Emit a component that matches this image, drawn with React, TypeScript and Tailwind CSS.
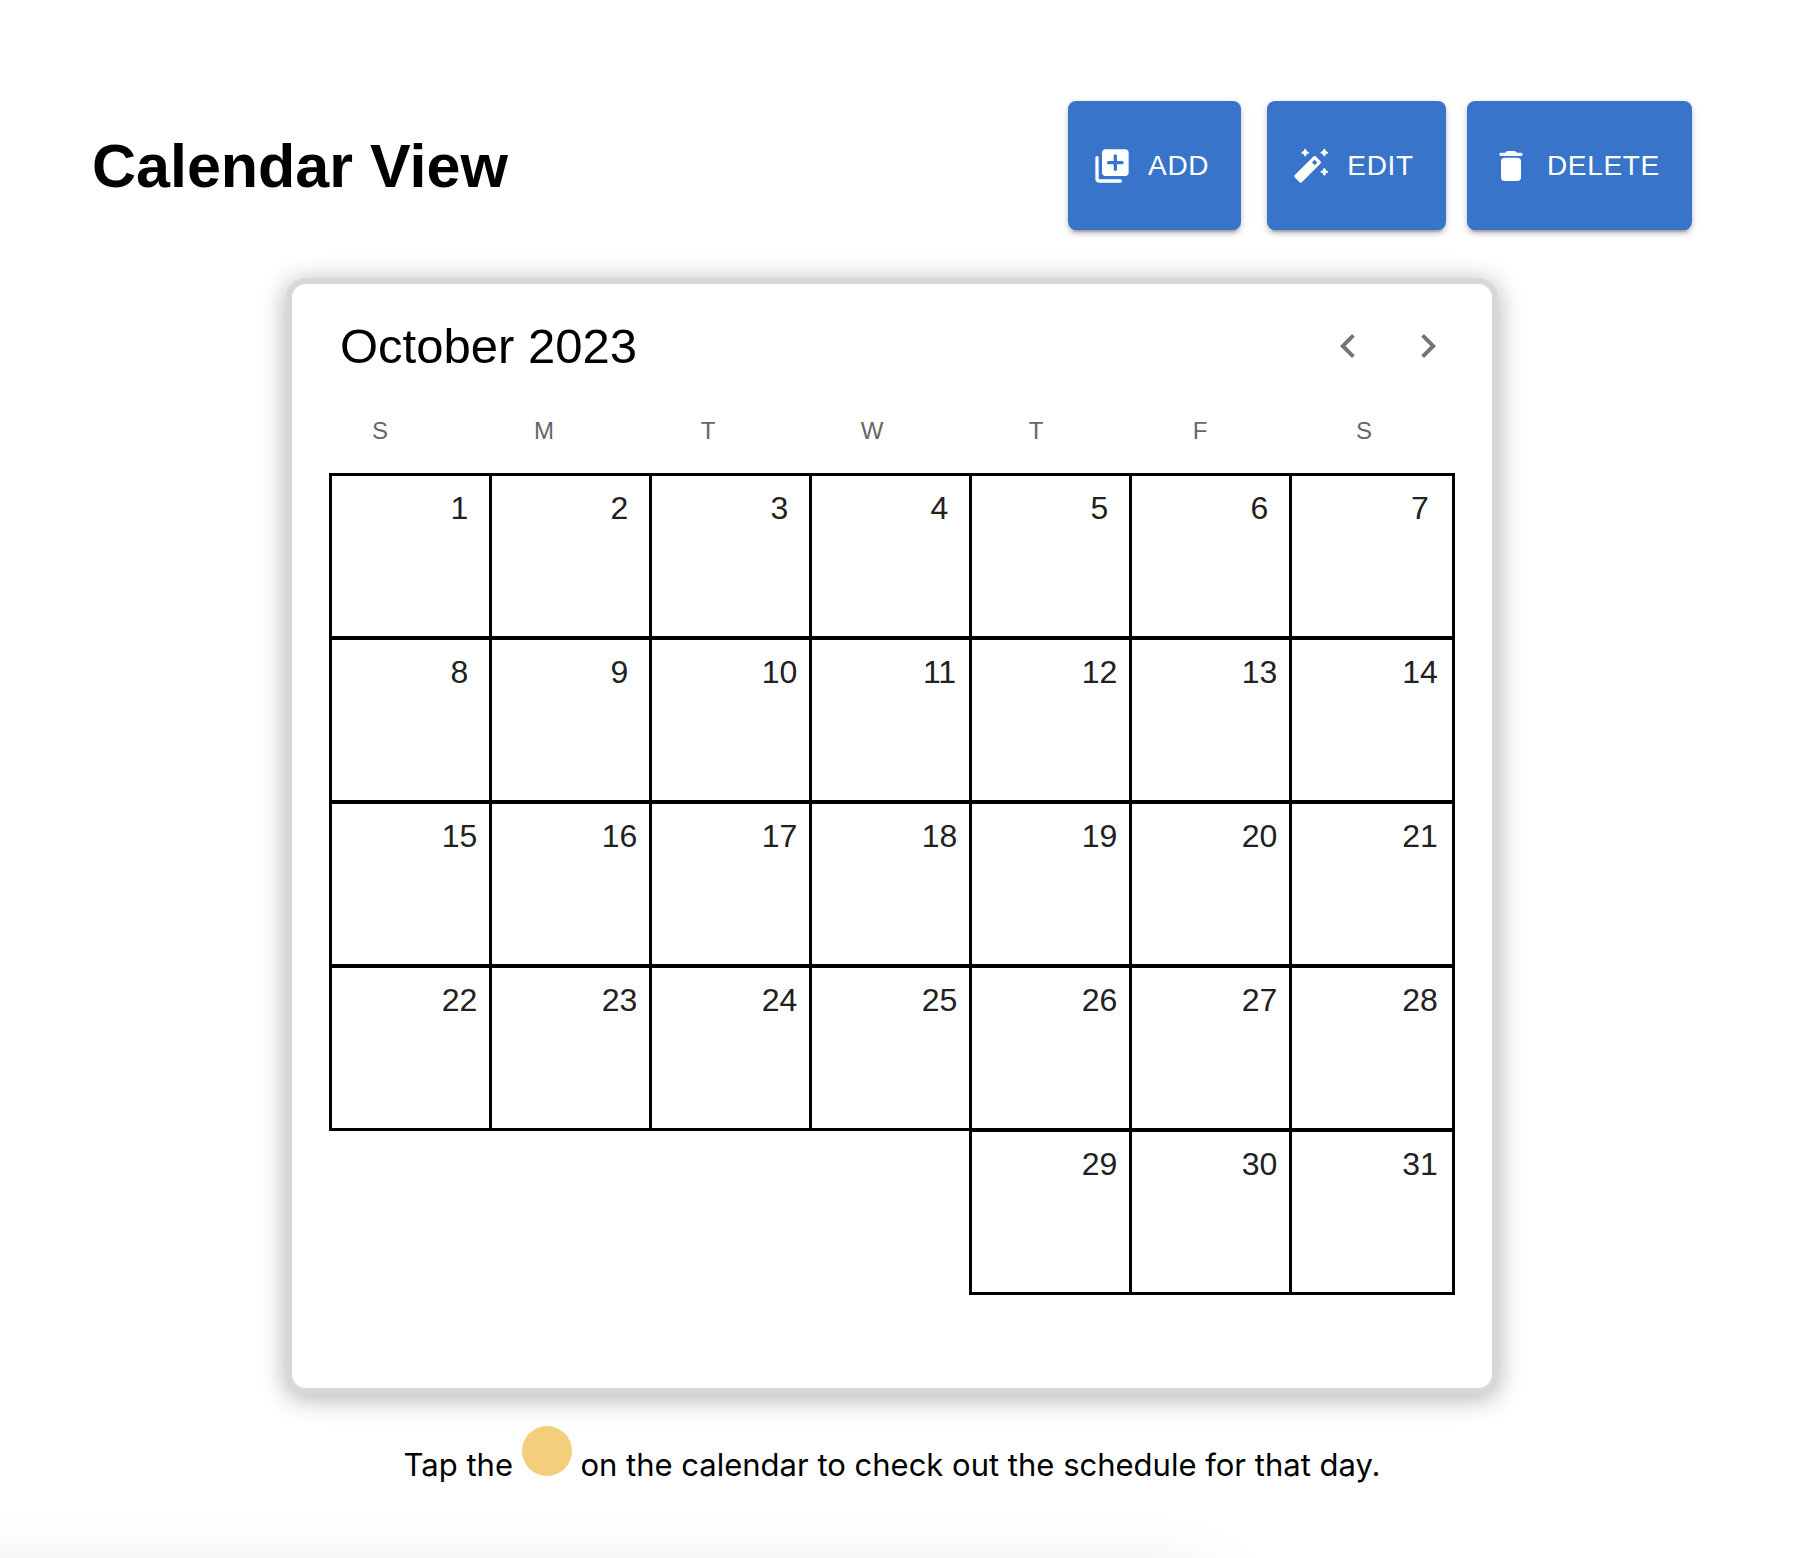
import React from "react";

const WEEKDAYS = ["S", "M", "T", "W", "T", "F", "S"];
const WEEKDAY_NAMES = ["Sunday", "Monday", "Tuesday", "Wednesday", "Thursday", "Friday", "Saturday"];

const WEEKS: (number | null)[][] = [
  [1, 2, 3, 4, 5, 6, 7],
  [8, 9, 10, 11, 12, 13, 14],
  [15, 16, 17, 18, 19, 20, 21],
  [22, 23, 24, 25, 26, 27, 28],
  [null, null, null, null, 29, 30, 31],
];

function Icon({ d, className }: { d: string; className: string }) {
  return (
    <svg viewBox="0 0 24 24" fill="currentColor" aria-hidden="true" className={className}>
      <path d={d} />
    </svg>
  );
}

const ICONS = {
  add: "M3 6c-.55 0-1 .45-1 1v13c0 1.1.9 2 2 2h13c.55 0 1-.45 1-1s-.45-1-1-1H5c-.55 0-1-.45-1-1V7c0-.55-.45-1-1-1zm17-4H8c-1.1 0-2 .9-2 2v12c0 1.1.9 2 2 2h12c1.1 0 2-.9 2-2V4c0-1.1-.9-2-2-2zm-2 9h-3v3c0 .55-.45 1-1 1s-1-.45-1-1v-3h-3c-.55 0-1-.45-1-1s.45-1 1-1h3V6c0-.55.45-1 1-1s1 .45 1 1v3h3c.55 0 1 .45 1 1s-.45 1-1 1z",
  edit: "m20.45 6 .49-1.06L22 4.45c.39-.18.39-.73 0-.91l-1.06-.49L20.45 2c-.18-.39-.73-.39-.91 0l-.49 1.06-1.05.49c-.39.18-.39.73 0 .91l1.06.49.49 1.05c.18.39.74.39.91 0zM8.95 6l.49-1.06 1.06-.49c.39-.18.39-.73 0-.91l-1.06-.48L8.95 2c-.17-.39-.73-.39-.9 0l-.49 1.06-1.06.49c-.39.18-.39.73 0 .91l1.06.49L8.05 6c.17.39.73.39.9 0zm10.6 7.5-.49 1.06-1.06.49c-.39.18-.39.73 0 .91l1.06.49.49 1.06c.18.39.73.39.91 0l.49-1.06 1.05-.5c.39-.18.39-.73 0-.91l-1.06-.49-.49-1.06c-.17-.38-.73-.38-.9.01zM17.71 9.12l-2.83-2.83c-.39-.39-1.02-.39-1.41 0L2.29 17.46c-.39.39-.39 1.02 0 1.41l2.83 2.83c.39.39 1.02.39 1.41 0L17.7 10.53c.4-.38.4-1.02.01-1.41zM14.21 8.3l1.6 1.6-1.6 1.6-1.6-1.6z",
  remove: "M6 19c0 1.1.9 2 2 2h8c1.1 0 2-.9 2-2V9c0-1.1-.9-2-2-2H8c-1.1 0-2 .9-2 2v10zM18 4h-2.5l-.71-.71c-.18-.18-.44-.29-.7-.29H9.91c-.26 0-.52.11-.7.29L8.5 4H6c-.55 0-1 .45-1 1s.45 1 1 1h12c.55 0 1-.45 1-1s-.45-1-1-1z",
  prev: "M15.41 16.59 10.83 12l4.58-4.59L14 6l-6 6 6 6z",
  next: "M8.59 16.59 13.17 12 8.59 7.41 10 6l6 6-6 6z",
};

function ActionButton({ icon, children }: { icon: string; children: React.ReactNode }) {
  return (
    <button
      type="button"
      className="flex h-[129px] items-center gap-4 rounded-lg bg-[#3974cb] pl-6 pr-8 text-[28px] tracking-wide text-white shadow-[0_6px_2px_-4px_rgba(0,0,0,0.2),0_4px_4px_rgba(0,0,0,0.14),0_2px_10px_rgba(0,0,0,0.12)]"
    >
      <Icon d={icon} className="size-10" />
      {children}
    </button>
  );
}

export default function App() {
  return (
    <div className="relative min-h-screen overflow-hidden bg-white pr-3 font-['Liberation_Sans',Arial,sans-serif] text-black">
      <header className="flex items-center justify-between px-[92px] pt-[101px]">
        <h1 className="text-[61px] leading-[64px] font-bold">Calendar View</h1>
        <div className="flex">
          <ActionButton icon={ICONS.add}>ADD</ActionButton>
          <div className="ml-[26px] mr-[21px]">
            <ActionButton icon={ICONS.edit}>EDIT</ActionButton>
          </div>
          <ActionButton icon={ICONS.remove}>DELETE</ActionButton>
        </div>
      </header>

      <main className="mt-12">
        <section
          aria-label="Calendar"
          className="mx-auto w-full max-w-[1212px] rounded-[20px] border-[6px] border-[#d8d8d8] bg-white pb-[95px] pl-[37px] pr-6 shadow-[0_4px_24px_2px_rgba(0,0,0,0.28)]"
        >
          <div className="flex h-[124px] items-center justify-between pl-[11px]">
            <h2 className="text-[49px] leading-[48px]">October 2023</h2>
            <div className="flex text-[#757575]">
              <button type="button" aria-label="Previous month" className="p-4">
                <Icon d={ICONS.prev} className="size-12" />
              </button>
              <button type="button" aria-label="Next month" className="p-4">
                <Icon d={ICONS.next} className="size-12" />
              </button>
            </div>
          </div>

          <table className="block">
            <thead className="block">
              <tr className="flex h-[65px] gap-[92px] pl-[15px] pt-[3px]">
                {WEEKDAYS.map((day, i) => (
                  <th key={i} scope="col" abbr={WEEKDAY_NAMES[i]} className="w-[72px] text-2xl leading-10 font-normal text-[#666666]">
                    {day}
                  </th>
                ))}
              </tr>
            </thead>
            <tbody className="block">
              {WEEKS.map((week, w) => (
                <tr key={w} className="-mb-0.5 flex">
                  {week.map((day, i) =>
                    day === null ? (
                      <td key={i} className="w-40" />
                    ) : (
                      <td key={i} className="w-40 last:w-[166px]">
                        <button
                          type="button"
                          className={
                            i === 6
                              ? "flex h-[166px] w-full border-[3px] border-black pt-3 text-[32px] text-[#212121]"
                              : "flex h-[166px] w-full border-y-[3px] border-l-[3px] border-black pt-3 text-[32px] text-[#212121]"
                          }
                        >
                          <span className="ml-[98px] w-[60px] text-center leading-10">{day}</span>
                        </button>
                      </td>
                    ),
                  )}
                </tr>
              ))}
            </tbody>
          </table>
        </section>

        <p className="mt-8 text-center font-['Inter',sans-serif] text-[31px]">
          Tap the <span className="inline-block size-[50px] rounded-full bg-[#f5ce7b]" /> on the calendar to check out the schedule for that day.
        </p>
      </main>

      <div className="absolute -left-20 top-full mt-5 h-40 w-[1310px] rounded-[60px] shadow-[0_0_70px_rgba(0,0,0,0.12)]" />
    </div>
  );
}
